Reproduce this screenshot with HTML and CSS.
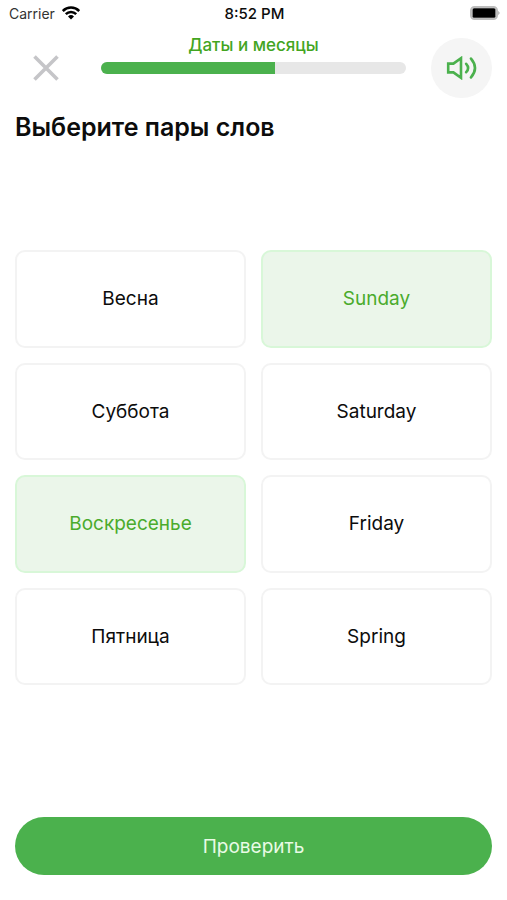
FILE: index.html
```html
<!DOCTYPE html>
<html lang="ru">
<head>
<meta charset="utf-8">
<meta name="viewport" content="width=device-width, initial-scale=1">
<title>Даты и месяцы</title>
<link rel="stylesheet" href="styles.css">
</head>
<body>
<div class="status">
  <div class="status-left">
    <span>Carrier</span>
    <svg width="18" height="14" viewBox="0 0 18 14" aria-hidden="true">
      <g fill="none" stroke="#000" stroke-width="2.5">
        <path d="M0.8 5A11.6 11.6 0 0 1 17.2 5"/>
        <path d="M3.8 8.2A7.3 7.3 0 0 1 14.2 8.2"/>
      </g>
      <path d="M9 13.6L6 10.5A4.3 4.3 0 0 1 12 10.5Z"/>
    </svg>
  </div>
  <time class="clock">8:52 PM</time>
  <svg class="battery" width="30" height="14" viewBox="0 0 30 14" aria-hidden="true">
    <rect x="1" y="1" width="26" height="12" rx="3.5" fill="#fff" stroke="#bdbdbd" stroke-width="2"/>
    <rect x="2.5" y="2.2" width="23" height="9.6" rx="1.5"/>
    <path d="M28 4.8L30 7L28 9.2Z" fill="#bdbdbd"/>
  </svg>
</div>
<header class="header">
  <button class="round" type="button" aria-label="Закрыть">
    <svg width="26" height="26" viewBox="0 0 26 26" fill="none" stroke="#c5c5c8" stroke-width="3.6" aria-hidden="true">
      <path d="M1.5 1.5L24.5 24.5M24.5 1.5L1.5 24.5"/>
    </svg>
  </button>
  <div class="lesson">
    <label class="lesson-name" for="lesson-progress">Даты и месяцы</label>
    <progress id="lesson-progress" class="bar" value="57" max="100"></progress>
  </div>
  <button class="round sound" type="button" aria-label="Прослушать">
    <svg width="32" height="24" viewBox="0 0 32 24" fill="none" stroke="#4bb14d" stroke-width="2.6" stroke-linecap="round" aria-hidden="true">
      <path stroke-linecap="butt" d="M2.2 7.6H7.4L15 2.2V21.8L7.4 16.4H2.2Z"/>
      <path d="M20.2 7.8Q24 12 20.2 16.2M25 2.6Q33 12 25 21.4"/>
    </svg>
  </button>
</header>
<main class="main">
  <h1 class="title">Выберите пары слов</h1>
  <div class="pairs">
    <button class="card" type="button">Весна</button>
    <button class="card selected" type="button" aria-pressed="true">Sunday</button>
    <button class="card" type="button">Суббота</button>
    <button class="card" type="button">Saturday</button>
    <button class="card selected" type="button" aria-pressed="true">Воскресенье</button>
    <button class="card" type="button">Friday</button>
    <button class="card" type="button">Пятница</button>
    <button class="card" type="button">Spring</button>
  </div>
  <button class="check" type="button">Проверить</button>
</main>
</body>
</html>
```
FILE: styles.css
```css
* {
  box-sizing: border-box;
}

body {
  display: flex;
  flex-direction: column;
  min-height: 100vh;
  margin: 0;
  background: #fff;
  color: #0c0c0c;
  font-family: Inter, "Liberation Sans", sans-serif;
}

button {
  padding: 0;
  border: 0;
  background: none;
  color: inherit;
  font: inherit;
}

.status {
  display: grid;
  grid-template-columns: 1fr auto 1fr;
  align-items: center;
  height: 26px;
  padding: 0 7px 0 9px;
  font-size: 14px;
}

.status-left {
  display: flex;
  align-items: center;
  gap: 7px;
  color: #333;
}

.clock {
  font-size: 15px;
  font-weight: 500;
}

.battery {
  justify-self: end;
}

.header {
  display: grid;
  grid-template-columns: 61px 1fr 61px;
  gap: 25px;
  padding: 9px 15px 0;
}

.round {
  display: flex;
  align-items: center;
  justify-content: center;
  height: 60px;
  margin-top: 3px;
  border-radius: 50%;
}

.sound {
  background: #f5f5f5;
}

.lesson {
  display: flex;
  flex-direction: column;
  gap: 7px;
}

.lesson-name {
  color: #43a51f;
  font-size: 17px;
  font-weight: 500;
  line-height: 20px;
  text-align: center;
}

.bar {
  display: block;
  width: 100%;
  height: 12px;
  overflow: hidden;
  border: 0;
  border-radius: 6px;
  background: #e7e7e7;
  appearance: none;
}

.bar::-webkit-progress-bar {
  background: #e7e7e7;
}

.bar::-webkit-progress-value {
  background: #4bb14d;
}

.main {
  display: flex;
  flex: 1;
  flex-direction: column;
  padding: 13px 15px 25px;
}

.title {
  margin: 0;
  font-size: 25px;
  font-weight: 600;
  line-height: 32px;
}

.pairs {
  display: grid;
  flex: 1;
  grid-template-columns: 1fr 1fr;
  grid-auto-rows: 1fr;
  gap: 15px;
  margin: 107px 0 132px;
}

.card {
  min-height: 64px;
  border: 2px solid #f3f3f3;
  border-radius: 10px;
  background: #fff;
  font-size: 19px;
}

.selected {
  border-color: #d8f7d8;
  background: #ebf6ea;
  color: #4aab2c;
}

.check {
  height: 58px;
  border-radius: 29px;
  background: #4bb14d;
  color: #e9fbe6;
  font-size: 19px;
}
```
